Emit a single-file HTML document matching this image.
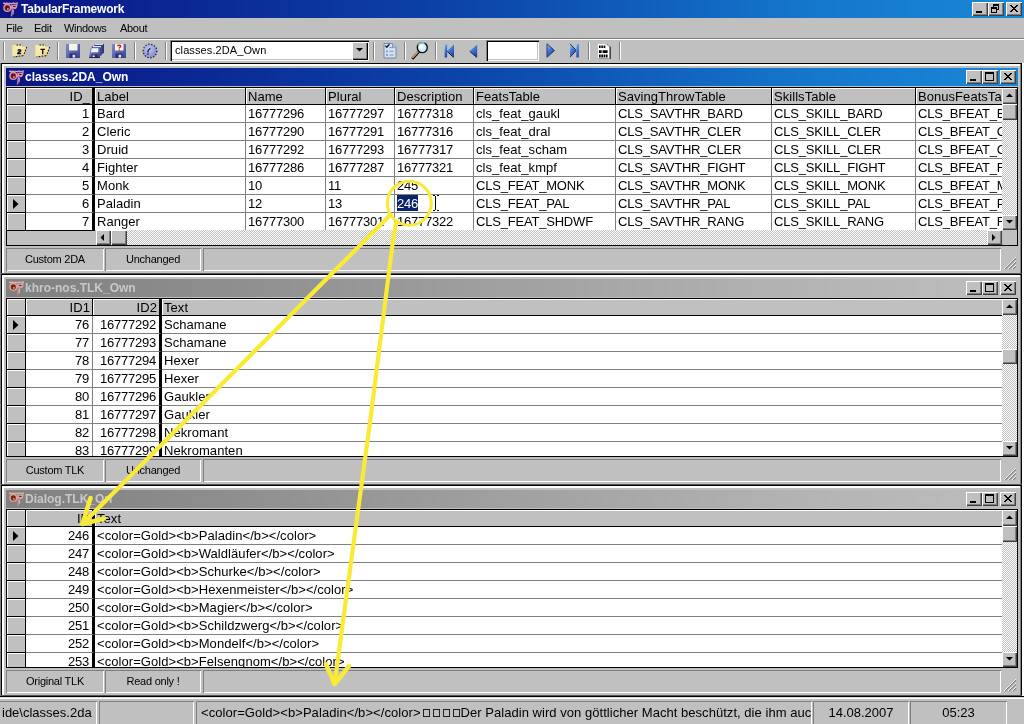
<!DOCTYPE html><html><head><meta charset="utf-8"><title>TabularFramework</title><style>
*{box-sizing:border-box;margin:0;padding:0}
html,body{width:1024px;height:724px;overflow:hidden;background:#c0c0c0}
body{position:relative;font-family:"Liberation Sans",sans-serif;font-size:13px;color:#000}
div,span,svg{position:absolute}
.t{white-space:nowrap;overflow:hidden}
.ttl{left:0;top:0;width:1024px;height:18px;background:linear-gradient(90deg,#0a1484 0%,#0c44aa 45%,#1478cc 80%,#1a86d6 100%)}
.ttxt{font-weight:bold;color:#fff;font-size:12px;letter-spacing:-0.2px;white-space:nowrap}
.menu{font-size:11px;letter-spacing:-0.3px;top:21px;height:14px;line-height:14px;white-space:nowrap}
.btn{width:16px;height:14px;background:#c0c0c0;box-shadow:inset 1px 1px 0 #fff,inset -1px -1px 0 #404040,inset -2px -2px 0 #808080}
.win{left:1px;width:1021px;height:211px;background:#c0c0c0}
.wt{left:5px;top:5px;width:1012px;height:18px}
.act{background:linear-gradient(90deg,#0a1484 0%,#0c44aa 45%,#1478cc 80%,#1a86d6 100%)}
.ina{background:linear-gradient(90deg,#808080 0%,#9a9a9a 40%,#b4b4b4 80%,#bdbdbd 100%)}
.ina .ttxt{color:#c8c8c8}
.grid{left:5px;top:24px;width:1012px;background:#fff;overflow:hidden;border-left:1px solid #000;border-top:1px solid #000}
.hc{background:#c0c0c0;box-shadow:inset 1px 1px 0 #fff;border-right:1px solid #000;border-bottom:1px solid #000;height:17px;line-height:17px;padding:0 2px 0 2px;letter-spacing:0.05px;white-space:nowrap;overflow:hidden}
.ic{background:#c0c0c0;box-shadow:inset 1px 1px 0 #fff;border-right:1px solid #000;border-bottom:1px solid #000;height:18px;width:19px;left:0}
.c{height:18px;line-height:18px;letter-spacing:0.06px;border-right:1px solid #808080;border-bottom:1px solid #808080;padding:0 2px 0 2px;white-space:nowrap;overflow:hidden;background:#fff}
.r{text-align:right}
.c.r{padding-right:3px}
.n{letter-spacing:-0.22px}
.u{letter-spacing:-0.2px}
.sp{top:185px;height:23px;background:#c0c0c0;box-shadow:inset 1px 1px 0 #808080,inset -1px -1px 0 #fff;font-size:11px;letter-spacing:-0.25px;line-height:22px;text-align:center;white-space:nowrap}
.sb{background-color:#fff;background-image:linear-gradient(45deg,#c0c0c0 25%,transparent 25%,transparent 75%,#c0c0c0 75%),linear-gradient(45deg,#c0c0c0 25%,transparent 25%,transparent 75%,#c0c0c0 75%);background-size:2px 2px;background-position:0 0,1px 1px}
.sbb{background:#c0c0c0;box-shadow:inset 1px 1px 0 #fff,inset -1px -1px 0 #404040,inset -2px -2px 0 #808080}
.msp{top:701px;height:24px;background:#c0c0c0;box-shadow:inset 1px 1px 0 #808080,inset -1px 0 0 #fff;font-size:13px;line-height:23px;white-space:nowrap;overflow:hidden}
.sep{top:42px;width:2px;height:18px;border-left:1px solid #808080;border-right:1px solid #fff}
</style></head><body><div id="app" style="left:0;top:0;width:1024px;height:724px;will-change:transform;overflow:hidden">
<div class="ttl"></div>
<svg style="left:1px;top:1px" width="18" height="16" viewBox="0 0 18 16"><path d="M2 2.6l1.4-.6 1 1 1.4-1 1.4.8 1.6-.8 1.6.8 1.8-.9 1.6.6 2.4-.6-.3 2.2" fill="none" stroke="#e8a8bc" stroke-width="1.1"/><circle cx="6.3" cy="6.9" r="3.3" fill="#5c1428" stroke="#dc90a8" stroke-width="1.5"/><circle cx="6.9" cy="7.9" r="0.9" fill="#f0a090"/><path d="M10.2 4.2c2-1.2 5-1 6.2.2 0 1.600-1 3.200-2.400 3.800-1.200-.8-2.600-1-3.600-.6z" fill="#e098b0"/><path d="M11.600 5.200c1.200-.6 2.800-.4 3.400.4-.8.800-2.400 1-3.400-.4z" fill="#68142c"/><path d="M11.400 7.200c-.2 3-.4 5.600-1 8.200" fill="none" stroke="#c47898" stroke-width="1.5"/><path d="M12.300 8.600c0 2-.1 3.400-.3 4.800" fill="none" stroke="#f4d0dc" stroke-width="0.9"/><path d="M9.200 5.600l2 2" stroke="#e8a0b4" stroke-width="1.2"/></svg>
<div class="ttxt" style="left:21px;top:2px;line-height:14px">TabularFramework</div>
<div class="btn" style="left:972px;top:2px"><div style="left:4px;top:9px;width:6px;height:2px;background:#000"></div></div>
<div class="btn" style="left:988px;top:2px"><div style="left:5px;top:2px;width:6px;height:6px;border:1px solid #000;border-top-width:2px"></div><div style="left:3px;top:5px;width:6px;height:6px;border:1px solid #000;border-top-width:2px;background:#c0c0c0"></div></div>
<div class="btn" style="left:1006px;top:2px"><svg style="left:4px;top:3px" width="8" height="7" viewBox="0 0 8 7"><path d="M0 0L7 7M1 0L8 7M7 0L0 7M8 0L1 7" stroke="#000" stroke-width="1" shape-rendering="crispEdges"/></svg></div>
<div class="menu" style="left:6px">File</div>
<div class="menu" style="left:34px">Edit</div>
<div class="menu" style="left:64px">Windows</div>
<div class="menu" style="left:120px">About</div>
<div style="left:0;top:38px;width:1024px;height:1px;background:#808080"></div>
<div style="left:0;top:39px;width:1024px;height:1px;background:#fff"></div>
<div class="sep" style="left:3px"></div>
<div class="sep" style="left:57px"></div>
<div class="sep" style="left:134px"></div>
<div class="sep" style="left:165px"></div>
<div class="sep" style="left:373px"></div>
<div class="sep" style="left:404px"></div>
<div class="sep" style="left:435px"></div>
<div class="sep" style="left:588px"></div>
<div class="sep" style="left:619px"></div>
<svg style="left:11px;top:44px" width="17" height="14" viewBox="0 0 17 14"><defs><linearGradient id="fg2" x1="0" y1="0" x2="1" y2="1"><stop offset="0" stop-color="#fff8c8"/><stop offset="1" stop-color="#ecd070"/></linearGradient></defs><path d="M1.300 1h9.700v3H6l-3 8.600H1.300z" fill="#f6eaa0"/><path d="M5.600 2.800H16l-3.400 8.700-10.400 1.300z" fill="url(#fg2)"/><path d="M5.500 1h6M15.800 3l-3.300 8.500M12 11.700l-9.400 1.200" fill="none" stroke="#181818" stroke-width="1.100" stroke-dasharray="1.600 1.300"/><path d="M6.800 6.600c.2-1.300 3-1.300 3 0 0 1-2.800 1.100-3 2.800h3.300" fill="none" stroke="#101040" stroke-width="1.500"/></svg>
<svg style="left:34px;top:44px" width="17" height="14" viewBox="0 0 17 14"><defs><linearGradient id="fgT" x1="0" y1="0" x2="1" y2="1"><stop offset="0" stop-color="#fff8c8"/><stop offset="1" stop-color="#ecd070"/></linearGradient></defs><path d="M1.300 1h9.700v3H6l-3 8.600H1.300z" fill="#f6eaa0"/><path d="M5.600 2.800H16l-3.400 8.700-10.400 1.300z" fill="url(#fgT)"/><path d="M5.500 1h6M15.800 3l-3.300 8.500M12 11.700l-9.400 1.200" fill="none" stroke="#181818" stroke-width="1.100" stroke-dasharray="1.600 1.300"/><path d="M6.400 5.400h4.600M8.700 5.400v4.800" fill="none" stroke="#101010" stroke-width="1.300"/></svg>
<svg style="left:66px;top:44px" width="14" height="14" viewBox="0 0 14 14"><defs><linearGradient id="fla" x1="0" y1="0" x2="1" y2="1"><stop offset="0" stop-color="#8088cc"/><stop offset="1" stop-color="#3c4490"/></linearGradient></defs><rect x="0" y="0" width="14" height="14" fill="url(#fla)"/><rect x="3" y="0" width="8.5" height="6.5" fill="#f4f4e8"/><rect x="3.5" y="9.5" width="7" height="4.5" fill="#2a3070"/><rect x="6.600" y="10.800" width="2.600" height="2.800" fill="#e0e4f4"/></svg>
<svg style="left:89px;top:44px" width="15" height="14" viewBox="0 0 15 14"><defs><linearGradient id="flm" x1="0" y1="0" x2="1" y2="1"><stop offset="0" stop-color="#9098d4"/><stop offset="1" stop-color="#343c88"/></linearGradient></defs><path d="M6 0h9v9l-2 1V2H5z" fill="#30387c"/><path d="M6 0h8v1H6z" fill="#d8dcf0"/><path d="M3.5 2h9.5v9l-2 1V4H2.5z" fill="#404890"/><path d="M4 2h8v1.2H4z" fill="#e8ecf8"/><path d="M1.5 4h9.5v9.5H0z" fill="url(#flm)"/><path d="M2.8 4.3h6.5v4H1.8z" fill="#f0f2fa"/><rect x="2.5" y="10.5" width="6" height="3" fill="#20265c"/><rect x="3.6" y="11.4" width="2.2" height="2" fill="#dfe3f5"/><path d="M0 13.6h11" stroke="#10143c" stroke-width="0.9"/></svg>
<svg style="left:112px;top:44px" width="14" height="14" viewBox="0 0 14 14"><defs><linearGradient id="flc" x1="0" y1="0" x2="1" y2="1"><stop offset="0" stop-color="#8088cc"/><stop offset="1" stop-color="#3c4490"/></linearGradient></defs><rect x="0" y="0" width="14" height="14" fill="url(#flc)"/><rect x="3" y="0" width="8.5" height="6.5" fill="#f4f4e8"/><rect x="3.5" y="9.5" width="7" height="4.5" fill="#2a3070"/><rect x="6.600" y="10.800" width="2.600" height="2.800" fill="#e0e4f4"/><path d="M5.6 2.3c0-1.5 3.2-1.5 3.2 0 0 1-1.6 1-1.6 2.2M7.2 5.6v0.9" fill="none" stroke="#c82020" stroke-width="1.4"/></svg>
<svg style="left:142px;top:43px" width="16" height="16" viewBox="0 0 16 16"><defs><radialGradient id="ck" cx="0.4" cy="0.35" r="0.7"><stop offset="0" stop-color="#c4c8ec"/><stop offset="1" stop-color="#8088cc"/></radialGradient></defs><circle cx="8" cy="8" r="6.6" fill="url(#ck)"/><circle cx="8" cy="8" r="6.8" fill="none" stroke="#181c50" stroke-width="1.3" stroke-dasharray="1.4 1.6"/><path d="M5.8 9.5c0-2 1.2-3.4 2.6-4.2" fill="none" stroke="#10143c" stroke-width="1.2"/><circle cx="6" cy="11" r="0.8" fill="#10143c"/></svg>
<div style="left:170px;top:40px;width:199px;height:21px;background:#fff;box-shadow:inset 1px 1px 0 #808080,inset 2px 2px 0 #000,inset -1px -1px 0 #fff,inset -2px -2px 0 #c0c0c0"></div>
<div style="left:175px;top:43px;font-size:11px;line-height:14px;letter-spacing:0.1px;white-space:nowrap">classes.2DA_Own</div>
<div class="sbb" style="left:352px;top:42px;width:16px;height:18px;box-shadow:inset 1px 1px 0 #fff,inset -1px -1px 0 #000,inset -2px -2px 0 #808080"><svg style="left:4px;top:6px" width="7" height="4" viewBox="0 0 7 4"><path d="M0 0L3.5 3.6L7 0Z" fill="#000"/></svg></div>
<svg style="left:383px;top:42px" width="14" height="17" viewBox="0 0 14 17"><path d="M1 1.5h8.5l3.5 3.5v11H1z" fill="#d4e0f4" stroke="#7888b0" stroke-width="1"/><path d="M9.5 1.5v3.5h3.5" fill="#b8c8e8" stroke="#7888b0" stroke-width="0.8"/><path d="M2.4 3.6l1.4 1.6 2.6-3" fill="none" stroke="#101030" stroke-width="1.3"/><path d="M6.5 5.6h4M6.5 9.3h4M6.5 13h4" stroke="#8090b8" stroke-width="1"/><rect x="3" y="8.4" width="2" height="2" fill="#90a0c8"/><rect x="3" y="12" width="2" height="2" fill="#90a0c8"/></svg>
<svg style="left:411px;top:41px" width="19" height="19" viewBox="0 0 19 19"><path d="M7.8 10.6L2 17" stroke="#000" stroke-width="2.8" stroke-linecap="round"/><path d="M7.6 10.2L1.8 16.4" stroke="#c89868" stroke-width="1.8" stroke-linecap="round"/><circle cx="11.3" cy="6.6" r="5" fill="#d0ecf8" stroke="#101010" stroke-width="1.4"/><path d="M7.4 4.6a4.6 4.6 0 0 1 6-2.4" fill="none" stroke="#a8c8d8" stroke-width="1.6"/><circle cx="10.4" cy="5.6" r="2.4" fill="#f4fcff" opacity="0.9"/></svg>
<svg style="left:0;top:0" width="0" height="0"><defs><linearGradient id="nv" x1="0" y1="0" x2="0.6" y2="1"><stop offset="0" stop-color="#a8c8f4"/><stop offset="0.5" stop-color="#4878d0"/><stop offset="1" stop-color="#2048a0"/></linearGradient></defs></svg>
<svg style="left:444px;top:44px" width="11" height="14" viewBox="0 0 11 14"><rect x="0.5" y="0.5" width="2.6" height="13" fill="url(#nv)"/><path d="M10 0.5v13L3 7z" fill="url(#nv)"/><path d="M3.2 7.4L9.6 13.4" stroke="#101840" stroke-width="1"/></svg>
<svg style="left:469px;top:44px" width="9" height="14" viewBox="0 0 9 14"><path d="M8.2 0.5v13L0.6 7z" fill="url(#nv)"/><path d="M0.8 7.4L7.8 13.4" stroke="#101840" stroke-width="1"/></svg>
<div style="left:486px;top:40px;width:53px;height:21px;background:#fff;box-shadow:inset 1px 1px 0 #808080,inset 2px 2px 0 #000,inset -1px -1px 0 #fff,inset -2px -2px 0 #c0c0c0"></div>
<svg style="left:546px;top:43px" width="9" height="15" viewBox="0 0 9 15"><path d="M1 0.8v13.4L8.4 7.5z" fill="url(#nv)"/><path d="M1 0.8v13.4L8.4 7.5z" fill="none" stroke="#182868" stroke-width="0.9"/></svg>
<svg style="left:569px;top:43px" width="11" height="15" viewBox="0 0 11 15"><path d="M1 0.8v13.4L7.4 7.5z" fill="url(#nv)"/><path d="M1 0.8L7.4 7.5L1 14.2" fill="none" stroke="#182868" stroke-width="0.9"/><rect x="7.2" y="1" width="2.6" height="13.4" fill="url(#nv)"/></svg>
<svg style="left:597px;top:43px" width="15" height="17" viewBox="0 0 15 17"><path d="M1 1h8.5l2.5 2.5V15H1z" fill="#fff"/><path d="M9.5 1l2.5 2.5" stroke="#202020" stroke-width="0.9" stroke-dasharray="1 1"/><path d="M13.2 3.5V16" stroke="#101010" stroke-width="1"/><path d="M1.5 15.6h10.5" stroke="#909090" stroke-width="0.8"/><path d="M2 3.8h7" stroke="#000" stroke-width="2.6" stroke-dasharray="1.6 0.7"/><path d="M2 8.6h2.6M5.6 8.6h5" stroke="#000" stroke-width="2.6"/><path d="M2 13h8.6" stroke="#000" stroke-width="2.8" stroke-dasharray="1.7 0.6"/></svg>
<div class="win" style="top:63px">
<div style="left:0;top:0;width:1021px;height:1px;background:#000"></div>
<div style="left:0;top:0;width:1px;height:211px;background:#000"></div>
<div style="left:1px;top:1px;width:1019px;height:2px;background:#fff"></div>
<div style="left:1px;top:1px;width:2px;height:209px;background:#fff"></div>
<div style="left:1019px;top:1px;width:1px;height:209px;background:#808080"></div>
<div style="left:1020px;top:0;width:1px;height:211px;background:#000"></div>
<div style="left:0;top:210px;width:1021px;height:1px;background:#585858"></div>
<div class="wt act">
<svg style="left:1px;top:1px" width="18" height="16" viewBox="0 0 18 16"><path d="M2 2.6l1.4-.6 1 1 1.4-1 1.4.8 1.6-.8 1.6.8 1.8-.9 1.6.6 2.4-.6-.3 2.2" fill="none" stroke="#e8a8bc" stroke-width="1.1"/><circle cx="6.3" cy="6.9" r="3.3" fill="#5c1428" stroke="#dc90a8" stroke-width="1.5"/><circle cx="6.9" cy="7.9" r="0.9" fill="#f0a090"/><path d="M10.2 4.2c2-1.2 5-1 6.2.2 0 1.600-1 3.200-2.400 3.800-1.200-.8-2.600-1-3.600-.6z" fill="#e098b0"/><path d="M11.600 5.200c1.200-.6 2.800-.4 3.400.4-.8.800-2.400 1-3.400-.4z" fill="#68142c"/><path d="M11.400 7.200c-.2 3-.4 5.600-1 8.200" fill="none" stroke="#c47898" stroke-width="1.5"/><path d="M12.300 8.600c0 2-.1 3.400-.3 4.800" fill="none" stroke="#f4d0dc" stroke-width="0.9"/><path d="M9.200 5.600l2 2" stroke="#e8a0b4" stroke-width="1.2"/></svg>
<div class="ttxt" style="left:19px;top:2px;line-height:14px;letter-spacing:0">classes.2DA_Own</div>
<div class="btn" style="left:960px;top:2px"><div style="left:4px;top:9px;width:6px;height:2px;background:#000"></div></div>
<div class="btn" style="left:976px;top:2px"><div style="left:3px;top:2px;width:9px;height:9px;border:1px solid #000;border-top-width:2px"></div></div>
<div class="btn" style="left:994px;top:2px"><svg style="left:4px;top:3px" width="8" height="7" viewBox="0 0 8 7"><path d="M0 0L7 7M1 0L8 7M7 0L0 7M8 0L1 7" stroke="#000" stroke-width="1" shape-rendering="crispEdges"/></svg></div>
</div>
<div class="grid" style="height:158px">
<div class="hc" style="left:0;top:0;width:19px"></div>
<div class="hc r" style="left:19px;top:0;width:69px;border-right:3px solid #000">ID_</div>
<div class="hc" style="left:88px;top:0;width:151px">Label</div>
<div class="hc" style="left:239px;top:0;width:80px">Name</div>
<div class="hc" style="left:319px;top:0;width:69px">Plural</div>
<div class="hc" style="left:388px;top:0;width:79px">Description</div>
<div class="hc" style="left:467px;top:0;width:142px">FeatsTable</div>
<div class="hc" style="left:609px;top:0;width:156px">SavingThrowTable</div>
<div class="hc" style="left:765px;top:0;width:144px">SkillsTable</div>
<div class="hc" style="left:909px;top:0;width:144px">BonusFeatsTable</div>
<div class="ic" style="top:17px"></div>
<div class="c r n" style="left:19px;top:17px;width:69px;border-right:3px solid #000">1</div>
<div class="c" style="left:88px;top:17px;width:151px">Bard</div>
<div class="c n" style="left:239px;top:17px;width:80px">16777296</div>
<div class="c n" style="left:319px;top:17px;width:69px">16777297</div>
<div class="c n" style="left:388px;top:17px;width:79px">16777318</div>
<div class="c" style="left:467px;top:17px;width:142px">cls_feat_gaukl</div>
<div class="c u" style="left:609px;top:17px;width:156px">CLS_SAVTHR_BARD</div>
<div class="c u" style="left:765px;top:17px;width:144px">CLS_SKILL_BARD</div>
<div class="c u" style="left:909px;top:17px;width:144px">CLS_BFEAT_BARD</div>
<div class="ic" style="top:35px"></div>
<div class="c r n" style="left:19px;top:35px;width:69px;border-right:3px solid #000">2</div>
<div class="c" style="left:88px;top:35px;width:151px">Cleric</div>
<div class="c n" style="left:239px;top:35px;width:80px">16777290</div>
<div class="c n" style="left:319px;top:35px;width:69px">16777291</div>
<div class="c n" style="left:388px;top:35px;width:79px">16777316</div>
<div class="c" style="left:467px;top:35px;width:142px">cls_feat_dral</div>
<div class="c u" style="left:609px;top:35px;width:156px">CLS_SAVTHR_CLER</div>
<div class="c u" style="left:765px;top:35px;width:144px">CLS_SKILL_CLER</div>
<div class="c u" style="left:909px;top:35px;width:144px">CLS_BFEAT_CLER</div>
<div class="ic" style="top:53px"></div>
<div class="c r n" style="left:19px;top:53px;width:69px;border-right:3px solid #000">3</div>
<div class="c" style="left:88px;top:53px;width:151px">Druid</div>
<div class="c n" style="left:239px;top:53px;width:80px">16777292</div>
<div class="c n" style="left:319px;top:53px;width:69px">16777293</div>
<div class="c n" style="left:388px;top:53px;width:79px">16777317</div>
<div class="c" style="left:467px;top:53px;width:142px">cls_feat_scham</div>
<div class="c u" style="left:609px;top:53px;width:156px">CLS_SAVTHR_CLER</div>
<div class="c u" style="left:765px;top:53px;width:144px">CLS_SKILL_CLER</div>
<div class="c u" style="left:909px;top:53px;width:144px">CLS_BFEAT_CLER</div>
<div class="ic" style="top:71px"></div>
<div class="c r n" style="left:19px;top:71px;width:69px;border-right:3px solid #000">4</div>
<div class="c" style="left:88px;top:71px;width:151px">Fighter</div>
<div class="c n" style="left:239px;top:71px;width:80px">16777286</div>
<div class="c n" style="left:319px;top:71px;width:69px">16777287</div>
<div class="c n" style="left:388px;top:71px;width:79px">16777321</div>
<div class="c" style="left:467px;top:71px;width:142px">cls_feat_kmpf</div>
<div class="c u" style="left:609px;top:71px;width:156px">CLS_SAVTHR_FIGHT</div>
<div class="c u" style="left:765px;top:71px;width:144px">CLS_SKILL_FIGHT</div>
<div class="c u" style="left:909px;top:71px;width:144px">CLS_BFEAT_FIGHT</div>
<div class="ic" style="top:89px"></div>
<div class="c r n" style="left:19px;top:89px;width:69px;border-right:3px solid #000">5</div>
<div class="c" style="left:88px;top:89px;width:151px">Monk</div>
<div class="c n" style="left:239px;top:89px;width:80px">10</div>
<div class="c n" style="left:319px;top:89px;width:69px">11</div>
<div class="c n" style="left:388px;top:89px;width:79px">245</div>
<div class="c u" style="left:467px;top:89px;width:142px">CLS_FEAT_MONK</div>
<div class="c u" style="left:609px;top:89px;width:156px">CLS_SAVTHR_MONK</div>
<div class="c u" style="left:765px;top:89px;width:144px">CLS_SKILL_MONK</div>
<div class="c u" style="left:909px;top:89px;width:144px">CLS_BFEAT_MONK</div>
<div class="ic" style="top:107px"><svg style="left:6px;top:4px" width="6" height="10" viewBox="0 0 6 10"><path d="M0 0L5.5 5L0 10Z" fill="#000"/></svg></div>
<div class="c r n" style="left:19px;top:107px;width:69px;border-right:3px solid #000">6</div>
<div class="c" style="left:88px;top:107px;width:151px">Paladin</div>
<div class="c n" style="left:239px;top:107px;width:80px">12</div>
<div class="c n" style="left:319px;top:107px;width:69px">13</div>
<div class="c n" style="left:388px;top:107px;width:79px"><div style="left:2px;top:0;width:21px;height:16px;background:#0a246a;color:#fff;line-height:18px;letter-spacing:-0.22px;overflow:hidden">246</div></div>
<div class="c u" style="left:467px;top:107px;width:142px">CLS_FEAT_PAL</div>
<div class="c u" style="left:609px;top:107px;width:156px">CLS_SAVTHR_PAL</div>
<div class="c u" style="left:765px;top:107px;width:144px">CLS_SKILL_PAL</div>
<div class="c u" style="left:909px;top:107px;width:144px">CLS_BFEAT_PAL</div>
<div class="ic" style="top:125px"></div>
<div class="c r n" style="left:19px;top:125px;width:69px;border-right:3px solid #000">7</div>
<div class="c" style="left:88px;top:125px;width:151px">Ranger</div>
<div class="c n" style="left:239px;top:125px;width:80px">16777300</div>
<div class="c n" style="left:319px;top:125px;width:69px">16777301</div>
<div class="c n" style="left:388px;top:125px;width:79px">16777322</div>
<div class="c u" style="left:467px;top:125px;width:142px">CLS_FEAT_SHDWF</div>
<div class="c u" style="left:609px;top:125px;width:156px">CLS_SAVTHR_RANG</div>
<div class="c u" style="left:765px;top:125px;width:144px">CLS_SKILL_RANG</div>
<div class="c u" style="left:909px;top:125px;width:144px">CLS_BFEAT_RANG</div>
</div>
<div style="left:6px;top:167px;width:1010px;height:15px;background:#c0c0c0"></div>
<div style="left:6px;top:167px;width:88px;height:1px;background:#000"></div>
<div class="sb" style="left:95px;top:167px;width:906px;height:15px"></div>
<div class="sbb" style="left:95px;top:167px;width:15px;height:15px"><svg style="left:4px;top:4px" width="4" height="7" viewBox="0 0 4 7"><path d="M4 0L0.5 3.5L4 7Z" fill="#000"/></svg></div>
<div class="sbb" style="left:110px;top:167px;width:16px;height:15px"></div>
<div class="sbb" style="left:986px;top:167px;width:15px;height:15px"><svg style="left:5px;top:4px" width="4" height="7" viewBox="0 0 4 7"><path d="M0 0L3.5 3.5L0 7Z" fill="#000"/></svg></div>
<div style="left:1001px;top:167px;width:15px;height:15px;background:#c0c0c0"></div>
<div class="sb" style="left:1001px;top:25px;width:15px;height:142px"></div><div class="sbb" style="left:1001px;top:25px;width:15px;height:16px"><svg style="left:4px;top:5px" width="7" height="4" viewBox="0 0 7 4"><path d="M0 4L3.5 0.5L7 4Z" fill="#000"/></svg></div><div class="sbb" style="left:1001px;top:152px;width:15px;height:15px"><svg style="left:4px;top:5px" width="7" height="4" viewBox="0 0 7 4"><path d="M0 0L3.5 3.5L7 0Z" fill="#000"/></svg></div><div class="sbb" style="left:1001px;top:41px;width:15px;height:16px"></div>
<div style="left:5px;top:182px;width:1012px;height:1px;background:#000"></div>
<div style="left:1016px;top:24px;width:1px;height:158px;background:#000"></div>
<div class="sp" style="left:5px;width:98px">Custom 2DA</div>
<div class="sp" style="left:104px;width:96px">Unchanged</div>
<div class="sp" style="left:202px;width:798px"></div>
<svg style="left:1003px;top:194px" width="13" height="13" viewBox="0 0 13 13"><path d="M12 1L1 12M12 5L5 12M12 9L9 12" stroke="#808080" stroke-width="1.4"/><path d="M12 0L0 12M12 4L4 12M12 8L8 12" stroke="#fff" stroke-width="0.8"/></svg>
</div>
<div class="win" style="top:274px">
<div style="left:0;top:0;width:1021px;height:1px;background:#000"></div>
<div style="left:0;top:0;width:1px;height:211px;background:#000"></div>
<div style="left:1px;top:1px;width:1019px;height:2px;background:#fff"></div>
<div style="left:1px;top:1px;width:2px;height:209px;background:#fff"></div>
<div style="left:1019px;top:1px;width:1px;height:209px;background:#808080"></div>
<div style="left:1020px;top:0;width:1px;height:211px;background:#000"></div>
<div style="left:0;top:210px;width:1021px;height:1px;background:#585858"></div>
<div class="wt ina">
<svg style="left:1px;top:1px" width="18" height="16" viewBox="0 0 18 16"><path d="M2 2.6l1.4-.6 1 1 1.4-1 1.4.8 1.6-.8 1.6.8 1.8-.9 1.6.6 2.4-.6-.3 2.2" fill="none" stroke="#e0b8b0" stroke-width="1.1"/><circle cx="6.3" cy="6.9" r="3.3" fill="#702818" stroke="#d8a098" stroke-width="1.5"/><circle cx="6.9" cy="7.9" r="0.9" fill="#f0a090"/><path d="M10.2 4.2c2-1.2 5-1 6.2.2 0 1.600-1 3.200-2.400 3.800-1.200-.8-2.600-1-3.600-.6z" fill="#dca8a0"/><path d="M11.600 5.200c1.200-.6 2.800-.4 3.400.4-.8.800-2.400 1-3.400-.4z" fill="#702818"/><path d="M11.400 7.200c-.2 3-.4 5.600-1 8.200" fill="none" stroke="#c08078" stroke-width="1.5"/><path d="M12.300 8.600c0 2-.1 3.400-.3 4.800" fill="none" stroke="#f4d0dc" stroke-width="0.9"/><path d="M9.200 5.600l2 2" stroke="#e8a0b4" stroke-width="1.2"/></svg>
<div class="ttxt" style="left:19px;top:2px;line-height:14px;letter-spacing:0">khro-nos.TLK_Own</div>
<div class="btn" style="left:960px;top:2px"><div style="left:4px;top:9px;width:6px;height:2px;background:#000"></div></div>
<div class="btn" style="left:976px;top:2px"><div style="left:3px;top:2px;width:9px;height:9px;border:1px solid #000;border-top-width:2px"></div></div>
<div class="btn" style="left:994px;top:2px"><svg style="left:4px;top:3px" width="8" height="7" viewBox="0 0 8 7"><path d="M0 0L7 7M1 0L8 7M7 0L0 7M8 0L1 7" stroke="#000" stroke-width="1" shape-rendering="crispEdges"/></svg></div>
</div>
<div class="grid" style="height:158px">
<div class="hc" style="left:0;top:0;width:19px"></div>
<div class="hc r" style="left:19px;top:0;width:67px">ID1</div>
<div class="hc r" style="left:86px;top:0;width:69px;border-right:3px solid #000">ID2</div>
<div class="hc" style="left:155px;top:0;width:898px">Text</div>
<div class="ic" style="top:17px"><svg style="left:6px;top:4px" width="6" height="10" viewBox="0 0 6 10"><path d="M0 0L5.5 5L0 10Z" fill="#000"/></svg></div>
<div class="c r n" style="left:19px;top:17px;width:67px">76</div>
<div class="c r n" style="left:86px;top:17px;width:69px;border-right:3px solid #000">16777292</div>
<div class="c" style="left:155px;top:17px;width:898px">Schamane</div>
<div class="ic" style="top:35px"></div>
<div class="c r n" style="left:19px;top:35px;width:67px">77</div>
<div class="c r n" style="left:86px;top:35px;width:69px;border-right:3px solid #000">16777293</div>
<div class="c" style="left:155px;top:35px;width:898px">Schamane</div>
<div class="ic" style="top:53px"></div>
<div class="c r n" style="left:19px;top:53px;width:67px">78</div>
<div class="c r n" style="left:86px;top:53px;width:69px;border-right:3px solid #000">16777294</div>
<div class="c" style="left:155px;top:53px;width:898px">Hexer</div>
<div class="ic" style="top:71px"></div>
<div class="c r n" style="left:19px;top:71px;width:67px">79</div>
<div class="c r n" style="left:86px;top:71px;width:69px;border-right:3px solid #000">16777295</div>
<div class="c" style="left:155px;top:71px;width:898px">Hexer</div>
<div class="ic" style="top:89px"></div>
<div class="c r n" style="left:19px;top:89px;width:67px">80</div>
<div class="c r n" style="left:86px;top:89px;width:69px;border-right:3px solid #000">16777296</div>
<div class="c" style="left:155px;top:89px;width:898px">Gaukler</div>
<div class="ic" style="top:107px"></div>
<div class="c r n" style="left:19px;top:107px;width:67px">81</div>
<div class="c r n" style="left:86px;top:107px;width:69px;border-right:3px solid #000">16777297</div>
<div class="c" style="left:155px;top:107px;width:898px">Gaukler</div>
<div class="ic" style="top:125px"></div>
<div class="c r n" style="left:19px;top:125px;width:67px">82</div>
<div class="c r n" style="left:86px;top:125px;width:69px;border-right:3px solid #000">16777298</div>
<div class="c" style="left:155px;top:125px;width:898px">Nekromant</div>
<div class="ic" style="top:143px"></div>
<div class="c r n" style="left:19px;top:143px;width:67px">83</div>
<div class="c r n" style="left:86px;top:143px;width:69px;border-right:3px solid #000">16777299</div>
<div class="c" style="left:155px;top:143px;width:898px">Nekromanten</div>
</div>
<div class="sb" style="left:1001px;top:25px;width:15px;height:157px"></div><div class="sbb" style="left:1001px;top:25px;width:15px;height:16px"><svg style="left:4px;top:5px" width="7" height="4" viewBox="0 0 7 4"><path d="M0 4L3.5 0.5L7 4Z" fill="#000"/></svg></div><div class="sbb" style="left:1001px;top:167px;width:15px;height:15px"><svg style="left:4px;top:5px" width="7" height="4" viewBox="0 0 7 4"><path d="M0 0L3.5 3.5L7 0Z" fill="#000"/></svg></div><div class="sbb" style="left:1001px;top:75px;width:15px;height:15px"></div>
<div style="left:5px;top:182px;width:1012px;height:1px;background:#000"></div>
<div style="left:1016px;top:24px;width:1px;height:158px;background:#000"></div>
<div class="sp" style="left:5px;width:98px">Custom TLK</div>
<div class="sp" style="left:104px;width:96px">Unchanged</div>
<div class="sp" style="left:202px;width:798px"></div>
<svg style="left:1003px;top:194px" width="13" height="13" viewBox="0 0 13 13"><path d="M12 1L1 12M12 5L5 12M12 9L9 12" stroke="#808080" stroke-width="1.4"/><path d="M12 0L0 12M12 4L4 12M12 8L8 12" stroke="#fff" stroke-width="0.8"/></svg>
</div>
<div class="win" style="top:485px">
<div style="left:0;top:0;width:1021px;height:1px;background:#000"></div>
<div style="left:0;top:0;width:1px;height:211px;background:#000"></div>
<div style="left:1px;top:1px;width:1019px;height:2px;background:#fff"></div>
<div style="left:1px;top:1px;width:2px;height:209px;background:#fff"></div>
<div style="left:1019px;top:1px;width:1px;height:209px;background:#808080"></div>
<div style="left:1020px;top:0;width:1px;height:211px;background:#000"></div>
<div style="left:0;top:210px;width:1021px;height:1px;background:#585858"></div>
<div class="wt ina">
<svg style="left:1px;top:1px" width="18" height="16" viewBox="0 0 18 16"><path d="M2 2.6l1.4-.6 1 1 1.4-1 1.4.8 1.6-.8 1.6.8 1.8-.9 1.6.6 2.4-.6-.3 2.2" fill="none" stroke="#e0b8b0" stroke-width="1.1"/><circle cx="6.3" cy="6.9" r="3.3" fill="#702818" stroke="#d8a098" stroke-width="1.5"/><circle cx="6.9" cy="7.9" r="0.9" fill="#f0a090"/><path d="M10.2 4.2c2-1.2 5-1 6.2.2 0 1.600-1 3.200-2.400 3.800-1.200-.8-2.600-1-3.600-.6z" fill="#dca8a0"/><path d="M11.600 5.200c1.200-.6 2.800-.4 3.400.4-.8.800-2.400 1-3.400-.4z" fill="#702818"/><path d="M11.400 7.200c-.2 3-.4 5.600-1 8.200" fill="none" stroke="#c08078" stroke-width="1.5"/><path d="M12.300 8.600c0 2-.1 3.400-.3 4.800" fill="none" stroke="#f4d0dc" stroke-width="0.9"/><path d="M9.200 5.600l2 2" stroke="#e8a0b4" stroke-width="1.2"/></svg>
<div class="ttxt" style="left:19px;top:2px;line-height:14px;letter-spacing:0">Dialog.TLK_Ori</div>
<div class="btn" style="left:960px;top:2px"><div style="left:4px;top:9px;width:6px;height:2px;background:#000"></div></div>
<div class="btn" style="left:976px;top:2px"><div style="left:3px;top:2px;width:9px;height:9px;border:1px solid #000;border-top-width:2px"></div></div>
<div class="btn" style="left:994px;top:2px"><svg style="left:4px;top:3px" width="8" height="7" viewBox="0 0 8 7"><path d="M0 0L7 7M1 0L8 7M7 0L0 7M8 0L1 7" stroke="#000" stroke-width="1" shape-rendering="crispEdges"/></svg></div>
</div>
<div class="grid" style="height:158px">
<div class="hc" style="left:0;top:0;width:19px"></div>
<div class="hc r" style="left:19px;top:0;width:69px;border-right:3px solid #000">ID</div>
<div class="hc" style="left:88px;top:0;width:965px">Text</div>
<div class="ic" style="top:17px"><svg style="left:6px;top:4px" width="6" height="10" viewBox="0 0 6 10"><path d="M0 0L5.5 5L0 10Z" fill="#000"/></svg></div>
<div class="c r n" style="left:19px;top:17px;width:69px;border-right:3px solid #000">246</div>
<div class="c" style="left:88px;top:17px;width:965px">&lt;color=Gold&gt;&lt;b&gt;Paladin&lt;/b&gt;&lt;/color&gt;</div>
<div class="ic" style="top:35px"></div>
<div class="c r n" style="left:19px;top:35px;width:69px;border-right:3px solid #000">247</div>
<div class="c" style="left:88px;top:35px;width:965px">&lt;color=Gold&gt;&lt;b&gt;Waldläufer&lt;/b&gt;&lt;/color&gt;</div>
<div class="ic" style="top:53px"></div>
<div class="c r n" style="left:19px;top:53px;width:69px;border-right:3px solid #000">248</div>
<div class="c" style="left:88px;top:53px;width:965px">&lt;color=Gold&gt;&lt;b&gt;Schurke&lt;/b&gt;&lt;/color&gt;</div>
<div class="ic" style="top:71px"></div>
<div class="c r n" style="left:19px;top:71px;width:69px;border-right:3px solid #000">249</div>
<div class="c" style="left:88px;top:71px;width:965px">&lt;color=Gold&gt;&lt;b&gt;Hexenmeister&lt;/b&gt;&lt;/color&gt;</div>
<div class="ic" style="top:89px"></div>
<div class="c r n" style="left:19px;top:89px;width:69px;border-right:3px solid #000">250</div>
<div class="c" style="left:88px;top:89px;width:965px">&lt;color=Gold&gt;&lt;b&gt;Magier&lt;/b&gt;&lt;/color&gt;</div>
<div class="ic" style="top:107px"></div>
<div class="c r n" style="left:19px;top:107px;width:69px;border-right:3px solid #000">251</div>
<div class="c" style="left:88px;top:107px;width:965px">&lt;color=Gold&gt;&lt;b&gt;Schildzwerg&lt;/b&gt;&lt;/color&gt;</div>
<div class="ic" style="top:125px"></div>
<div class="c r n" style="left:19px;top:125px;width:69px;border-right:3px solid #000">252</div>
<div class="c" style="left:88px;top:125px;width:965px">&lt;color=Gold&gt;&lt;b&gt;Mondelf&lt;/b&gt;&lt;/color&gt;</div>
<div class="ic" style="top:143px"></div>
<div class="c r n" style="left:19px;top:143px;width:69px;border-right:3px solid #000">253</div>
<div class="c" style="left:88px;top:143px;width:965px">&lt;color=Gold&gt;&lt;b&gt;Felsengnom&lt;/b&gt;&lt;/color&gt;</div>
</div>
<div class="sb" style="left:1001px;top:25px;width:15px;height:157px"></div><div class="sbb" style="left:1001px;top:25px;width:15px;height:16px"><svg style="left:4px;top:5px" width="7" height="4" viewBox="0 0 7 4"><path d="M0 4L3.5 0.5L7 4Z" fill="#000"/></svg></div><div class="sbb" style="left:1001px;top:167px;width:15px;height:15px"><svg style="left:4px;top:5px" width="7" height="4" viewBox="0 0 7 4"><path d="M0 0L3.5 3.5L7 0Z" fill="#000"/></svg></div><div class="sbb" style="left:1001px;top:41px;width:15px;height:16px"></div>
<div style="left:5px;top:182px;width:1012px;height:1px;background:#000"></div>
<div style="left:1016px;top:24px;width:1px;height:158px;background:#000"></div>
<div class="sp" style="left:5px;width:98px">Original TLK</div>
<div class="sp" style="left:104px;width:96px">Read only !</div>
<div class="sp" style="left:202px;width:798px"></div>
<svg style="left:1003px;top:194px" width="13" height="13" viewBox="0 0 13 13"><path d="M12 1L1 12M12 5L5 12M12 9L9 12" stroke="#808080" stroke-width="1.4"/><path d="M12 0L0 12M12 4L4 12M12 8L8 12" stroke="#fff" stroke-width="0.8"/></svg>
</div>
<div style="left:1022px;top:63px;width:2px;height:635px;background:#fff"></div>
<div style="left:0;top:63px;width:1px;height:633px;background:#808080"></div>
<div style="left:0;top:696px;width:1024px;height:1px;background:#000"></div>
<div style="left:0;top:697px;width:1024px;height:1px;background:#dcdcdc"></div>
<div style="left:0;top:698px;width:1024px;height:1px;background:#fff"></div>
<div style="left:0;top:699px;width:1024px;height:25px;background:#c0c0c0"></div>
<div class="msp" style="left:-2px;width:99px;padding-left:4px">ide\classes.2da</div>
<div class="msp" style="left:99px;width:95px"></div>
<div class="msp" style="left:196px;width:616px;padding-left:5px"><span id="st1" style="position:static;letter-spacing:0.07px">&lt;color=Gold&gt;&lt;b&gt;Paladin&lt;/b&gt;&lt;/color&gt;</span><span style="position:static;display:inline-block;width:10px;height:8px;vertical-align:baseline"><span style="left:auto;top:auto;margin-left:2px;width:7px;height:8px;border:1px solid #202020;position:static;display:inline-block"></span></span><span style="position:static;display:inline-block;width:10px;height:8px;vertical-align:baseline"><span style="left:auto;top:auto;margin-left:2px;width:7px;height:8px;border:1px solid #202020;position:static;display:inline-block"></span></span><span style="position:static;display:inline-block;width:10px;height:8px;vertical-align:baseline"><span style="left:auto;top:auto;margin-left:2px;width:7px;height:8px;border:1px solid #202020;position:static;display:inline-block"></span></span><span style="position:static;display:inline-block;width:10px;height:8px;vertical-align:baseline"><span style="left:auto;top:auto;margin-left:2px;width:7px;height:8px;border:1px solid #202020;position:static;display:inline-block"></span></span><span id="st2" style="position:static;letter-spacing:0.04px">Der Paladin wird von göttlicher Macht beschützt, die ihm auch</span></div>
<div class="msp" style="left:813px;width:96px;text-align:center">14.08.2007</div>
<div class="msp" style="left:910px;width:97px;text-align:center">05:23</div>
<svg style="left:0;top:0" width="1024" height="724" viewBox="0 0 1024 724"><g fill="none" stroke="#f8ea36" stroke-linecap="round" stroke-linejoin="round"><circle cx="409.3" cy="203.2" r="22" stroke-width="3"/><path d="M390.500 214.700L82.500 524" stroke-width="4.300"/><path d="M90.5 498L82.5 524L104 518.5" stroke-width="4.5"/><path d="M396 223L393 240L370.3 420L343.2 620L334.6 684" stroke-width="4.2"/><path d="M325.8 664L334.6 684L349 666" stroke-width="4.5"/></g><path d="M432.5 195.5h2M436.5 195.5h2M435.5 196v14M432.5 210.5h2M436.5 210.5h2" stroke="#000" stroke-width="1" fill="none" shape-rendering="crispEdges"/></svg>
</div></body></html>
